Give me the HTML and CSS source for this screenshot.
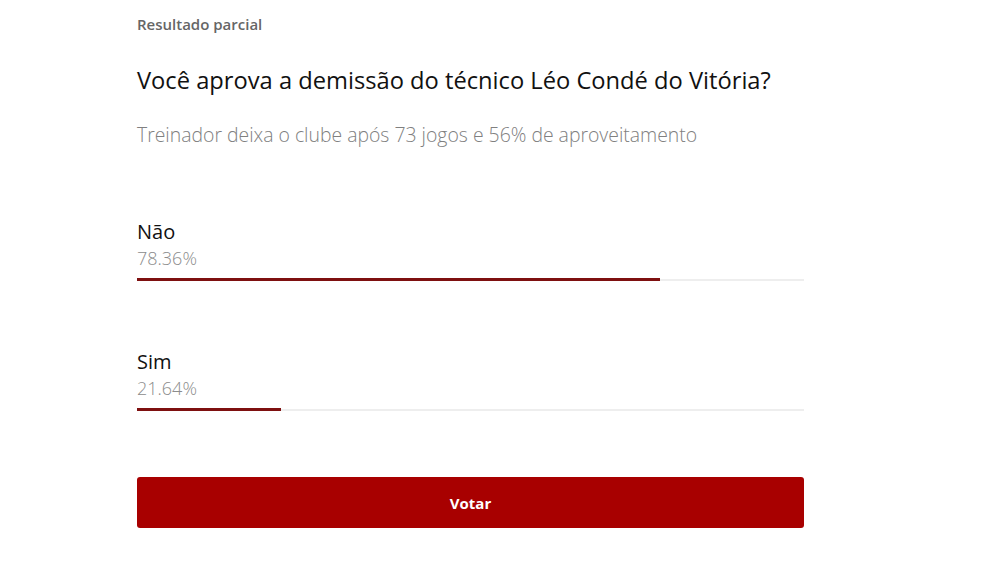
FILE: index.html
```html
<!DOCTYPE html>
<html lang="pt-BR">
<head>
    <meta charset="UTF-8">
    <meta name="viewport" content="width=device-width, initial-scale=1.0">
    <title>Resultado parcial</title>
    <link rel="stylesheet" href="styles.css">
</head>
<body>

    <div class="poll">
        <p class="poll-label">Resultado parcial</p>
        <h1 class="poll-title">Você aprova a demissão do técnico Léo Condé do Vitória?</h1>
        <p class="poll-desc">Treinador deixa o clube após 73 jogos e 56% de aproveitamento</p>

        <!-- Options -->
        <div class="option">
            <div class="option-name">Não</div>
            <div class="option-pct">78.36%</div>
            <div class="bar">
                <div class="bar-fill" style="width: 78.36%"></div>
            </div>
        </div>

        <div class="option">
            <div class="option-name">Sim</div>
            <div class="option-pct">21.64%</div>
            <div class="bar">
                <div class="bar-fill" style="width: 21.64%"></div>
            </div>
        </div>

        <button class="vote-btn">Votar</button>
    </div>

</body>
</html>
```

FILE: styles.css
```css
body {
    margin: 0;
    font-family: "Open Sans", Arial, sans-serif;
    background: #fff;
    color: #222;
}
.poll {
    width: 667px;
    margin-left: 137px;
    padding-top: 14px;
}
.poll-label {
    margin: 0;
    font-size: 15px;
    font-weight: 600;
    color: #666;
    line-height: 20px;
}
.poll-title {
    margin: 31px 0 0;
    font-size: 23.7px;
    font-weight: 400;
    line-height: 30px;
    color: #111;
}
.poll-desc {
    margin: 27px 0 0;
    font-size: 19.4px;
    font-weight: 300;
    line-height: 26px;
    color: #808080;
}
.option {
    margin-top: 70px;
}
.option + .option {
    margin-top: 67px;
}
.option-name {
    font-size: 20px;
    font-weight: 400;
    line-height: 28px;
    color: #111;
}
.option-pct {
    margin-top: 1px;
    font-size: 18px;
    font-weight: 300;
    line-height: 22px;
    color: #8c8c8c;
}
.bar {
    position: relative;
    height: 2px;
    margin-top: 10px;
    background-color: #eee;
}
.bar-fill {
    position: absolute;
    left: 0;
    top: -1px;
    height: 3px;
    background-color: #7e1010;
}
.vote-btn {
    display: block;
    width: 100%;
    height: 51px;
    margin-top: 66px;
    border: none;
    border-radius: 3px;
    background-color: #a80000;
    color: #fff;
    font-family: "Open Sans", Arial, sans-serif;
    font-size: 15px;
    font-weight: 700;
    cursor: pointer;
}
```
